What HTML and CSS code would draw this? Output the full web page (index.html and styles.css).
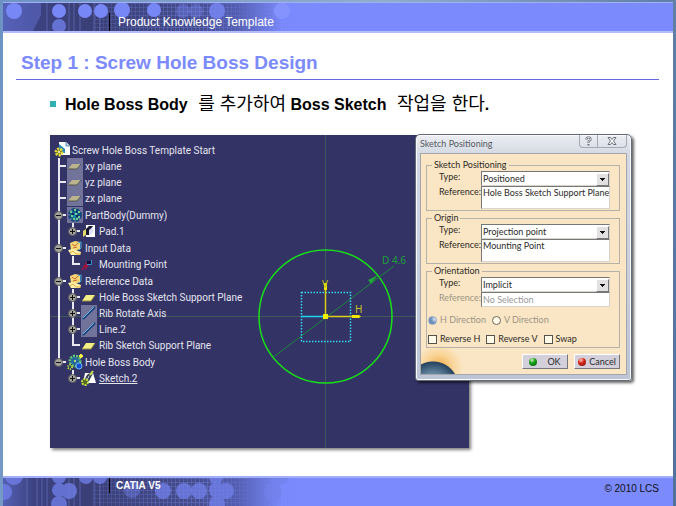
FILE: index.html
```
<!DOCTYPE html>
<html lang="ko">

<head>
    <meta charset="UTF-8">
    <meta name="viewport" content="width=device-width, initial-scale=1.0">
    <title>Product Knowledge Template</title>
    <link rel="stylesheet" href="styles.css">
</head>

<body>

    <!-- shared icons -->
    <svg class="defs" width="0" height="0" aria-hidden="true">
        <defs>
            <linearGradient id="fade" x1="0" x2="1" y1="0" y2="0">
                <stop offset="0" stop-color="#5560b4"/>
                <stop offset="0.1" stop-color="#3c4280"/>
                <stop offset="0.3" stop-color="#3a3f76"/>
                <stop offset="0.62" stop-color="#454c8c"/>
                <stop offset="0.76" stop-color="#545fb4"/>
                <stop offset="0.9" stop-color="#7b8afc" stop-opacity="0.9"/>
                <stop offset="1" stop-color="#7b8afc"/>
            </linearGradient>
            <linearGradient id="meshFade" x1="0" x2="1" y1="0" y2="0">
                <stop offset="0" stop-color="#fff" stop-opacity="0.4"/>
                <stop offset="0.6" stop-color="#fff"/>
                <stop offset="1" stop-color="#fff" stop-opacity="0"/>
            </linearGradient>
            <pattern id="mesh" width="4" height="4" patternUnits="userSpaceOnUse">
                <path d="M0 .5H4M.5 0V4" stroke="#6873c8" stroke-opacity=".6"/>
            </pattern>
            <mask id="meshMask">
                <rect x="90" width="200" height="30" fill="url(#meshFade)"/>
            </mask>

            <symbol id="plane" viewBox="0 0 16 16">
                <path d="M5 6H14L10 12H1Z" fill="#f4ee86"/>
                <path d="M1 12H10L14 6" fill="none" stroke="#9b9440"/>
            </symbol>
            <symbol id="planeHidden" viewBox="0 0 16 16">
                <rect width="16" height="16" fill="#71739b"/>
                <path d="M5 6H14L10 11H1Z" fill="#b9b48c"/>
                <path d="M1 11H10L14 6" fill="none" stroke="#57564c"/>
            </symbol>
            <symbol id="line" viewBox="0 0 16 16">
                <rect width="16" height="16" fill="#71739b"/>
                <path d="M2 14L14 2" stroke="#0c3f78" stroke-width="2"/>
                <path d="M2 13L13 2" stroke="#79b7e6"/>
            </symbol>
            <symbol id="gearBody" viewBox="0 0 16 16">
                <rect width="16" height="16" fill="#71739b"/>
                <circle cx="8" cy="8" r="5" fill="#1c7fa6" stroke="#124a7c" stroke-width="4" stroke-dasharray="3 1"/>
                <path d="M3 5h2M7 3h2M11 5h2M4 9h2M8 7h2M11 10h2M6 12h2M9 12h2" stroke="#6ed08a" stroke-width="2"/>
                <path d="M5 7h2M9 9h2M9 5h1" stroke="#10265f" stroke-width="2"/>
            </symbol>
            <symbol id="pad" viewBox="0 0 16 16">
                <path d="M5 2H14V14H5Z" fill="#fff"/>
                <path d="M4 7L8 3H12L9 7V12H4Z" fill="#17172f"/>
                <path d="M2 8L5 6V12L2 14Z" fill="#e5d66a"/>
                <path d="M8 7L12 4V9L8 13Z" fill="#dcdff5"/>
            </symbol>
            <symbol id="geoSet" viewBox="0 0 16 16">
                <path d="M3 3L8 1L13 2V9L8 11L4 10Z" fill="#f5d777"/>
                <path d="M5 4L8 6L11 3M6 8L10 7" fill="none" stroke="#ce6535"/>
                <path d="M1 10L6 9L14 12L13 15H4Z" fill="#fff2a8"/>
                <path d="M3 13L6 11L9 14H14" fill="none" stroke="#e0a83d"/>
                <path d="M11 3L14 2V8L12 10" fill="none" stroke="#49b2da"/>
            </symbol>
            <symbol id="point" viewBox="0 0 16 16">
                <path d="M1 14L5 8V12L7 9" fill="none" stroke="#a3123d" stroke-width="1.500"/>
                <rect x="6" y="5" width="4" height="4" fill="#0c1038"/>
                <path d="M6 8.500H10.500V4" fill="none" stroke="#3c8fd0"/>
            </symbol>
            <symbol id="bodyNew" viewBox="0 0 16 16">
                <circle cx="8" cy="7" r="5" fill="none" stroke="#63c97a" stroke-width="3" stroke-dasharray="2 1"/>
                <circle cx="8" cy="7" r="4" fill="#276b9c"/>
                <circle cx="8" cy="7" r="1" fill="#e4f28b"/>
                <circle cx="3" cy="13" r="2" fill="none" stroke="#b9e33d" stroke-width="2" stroke-dasharray="1 1"/>
                <circle cx="12" cy="12" r="3" fill="#174ed0" stroke="#68b9f8"/>
                <path d="M14 0V4M12 2H16" stroke="#f3ed3b" stroke-width="2"/>
            </symbol>
            <symbol id="sketch" viewBox="0 0 16 16">
                <path d="M4 3H12L15 13H2Z" fill="#fff"/>
                <path d="M5 10C6 5 8 4 10 4M11 3L7 11" fill="none" stroke="#344057" stroke-width="2"/>
                <circle cx="4" cy="12" r="3" fill="#526620" stroke="#c4e24c" stroke-width="2" stroke-dasharray="2 1"/>
                <path d="M9 5L12 1" stroke="#c8e44a" stroke-width="2"/>
            </symbol>
            <symbol id="part" viewBox="0 0 16 16">
                <path d="M5 0H12L16 4V13H5Z" fill="#fff"/>
                <path d="M12 0V4H16" fill="#bcd6ea" stroke="#5f8fb8"/>
                <path d="M5 2L11 7V11H5Z" fill="#2386b8"/>
                <circle cx="5" cy="10" r="3" fill="#6f6a12" stroke="#e5dc3a" stroke-width="3" stroke-dasharray="2 1"/>
                <circle cx="5" cy="10" r="1" fill="#fff"/>
            </symbol>
        </defs>
    </svg>

    <div class="slide">
        <header class="band">
            <svg class="band-art" viewBox="0 0 340 28" preserveAspectRatio="xMinYMin slice" aria-hidden="true">
                <rect width="310" height="28" fill="url(#fade)"/>
                <path d="M0 0H38V12L30 28H0Z" fill="#5762bb" opacity=".7"/>
                <path d="M44 0V28M66 0V28M71 0V28M77 0V28M91 0V28M97 0V28" stroke="#6c76c4" opacity=".6"/>
                <rect width="310" height="28" fill="url(#mesh)" mask="url(#meshMask)"/>
                <g fill="#7887f6">
                    <circle cx="11" cy="8" r="8"/>
                    <circle cx="56" cy="8" r="7"/>
                    <circle cx="56" cy="23" r="7" opacity=".7"/>
                    <circle cx="82" cy="8" r="7"/>
                    <circle cx="98" cy="8" r="7"/>
                    <circle cx="119" cy="7" r="8"/>
                    <circle cx="151" cy="7" r="7"/>
                    <circle cx="180" cy="8" r="7" opacity=".4"/>
                    <circle cx="193" cy="8" r="7" opacity=".4"/>
                    <circle cx="214" cy="8" r="8" opacity=".8"/>
                    <circle cx="279" cy="8" r="8" fill="#8593ff"/>
                </g>
            </svg>
            <p class="band-text">Product Knowledge Template</p>
        </header>

        <main>
            <h1>Step 1 : Screw Hole Boss Design</h1>
            <ul class="points">
                <li>Hole Boss Body <span class="ko">를 추가하여</span> Boss Sketch <span class="ko">작업을 한다</span>.</li>
            </ul>

            <div class="capture">
                <div class="viewer">
                    <svg class="sketch" viewBox="0 0 419 313" preserveAspectRatio="xMinYMin slice" role="img" aria-label="Sketch with circle D 4.6">
                        <path d="M0 181.500H419M275.500 0V313" stroke="#40585a"/>
                        <circle cx="275.500" cy="181.500" r="66.500" fill="none" stroke="#18e018" stroke-width="1.500"/>
                        <path d="M223.500 222L344 131" stroke="#1d8a3a"/>
                        <path d="M328 140L321 149L318 145Z" fill="#1fa53a"/>
                        <rect x="251.500" y="157.500" width="49" height="49" fill="none" stroke="#35d8ee" stroke-width="1.500" stroke-dasharray="1.500 1.500"/>
                        <path d="M251 181.500H275" stroke="#20d7f0" stroke-width="1.500"/>
                        <path d="M275.500 181V150M275 181.500H302" stroke="#d8d010" stroke-width="1.500"/>
                        <path d="M274 148H277V155H274ZM302 180H309L311 181.500L309 183H302Z" fill="#f0e800"/>
                        <rect x="273" y="179" width="5" height="5" fill="#f4f000"/>
                        <g class="sketch-text">
                            <text x="272" y="153" fill="#c8c020">V</text>
                            <text x="305" y="178" fill="#c8c020">H</text>
                            <text x="332" y="129" fill="#1fa03c">D 4.6</text>
                        </g>
                    </svg>

                    <div class="tree">
                        <div class="root"><svg class="icon"><use href="#part"/></svg>Screw Hole Boss Template Start</div>
                        <ul>
                            <li><div class="node"><svg class="icon"><use href="#planeHidden"/></svg>xy plane</div></li>
                            <li><div class="node"><svg class="icon"><use href="#planeHidden"/></svg>yz plane</div></li>
                            <li><div class="node"><svg class="icon"><use href="#planeHidden"/></svg>zx plane</div></li>
                            <li class="group">
                                <div class="node"><button class="toggle open" aria-label="Collapse PartBody"></button><svg class="icon"><use href="#gearBody"/></svg>PartBody(Dummy)</div>
                                <ul>
                                    <li><div class="node"><button class="toggle" aria-label="Expand Pad.1"></button><svg class="icon"><use href="#pad"/></svg>Pad.1</div></li>
                                </ul>
                            </li>
                            <li class="group">
                                <div class="node"><button class="toggle open" aria-label="Collapse Input Data"></button><svg class="icon"><use href="#geoSet"/></svg>Input Data</div>
                                <ul>
                                    <li><div class="node"><svg class="icon"><use href="#point"/></svg>Mounting Point</div></li>
                                </ul>
                            </li>
                            <li class="group">
                                <div class="node"><button class="toggle open" aria-label="Collapse Reference Data"></button><svg class="icon"><use href="#geoSet"/></svg>Reference Data</div>
                                <ul>
                                    <li><div class="node"><button class="toggle" aria-label="Expand Hole Boss Sketch Support Plane"></button><svg class="icon"><use href="#plane"/></svg>Hole Boss Sketch Support Plane</div></li>
                                    <li><div class="node"><button class="toggle" aria-label="Expand Rib Rotate Axis"></button><svg class="icon"><use href="#line"/></svg>Rib Rotate Axis</div></li>
                                    <li><div class="node"><button class="toggle" aria-label="Expand Line.2"></button><svg class="icon"><use href="#line"/></svg>Line.2</div></li>
                                    <li><div class="node"><svg class="icon"><use href="#plane"/></svg>Rib Sketch Support Plane</div></li>
                                </ul>
                            </li>
                            <li class="group">
                                <div class="node"><button class="toggle open" aria-label="Collapse Hole Boss Body"></button><svg class="icon"><use href="#bodyNew"/></svg>Hole Boss Body</div>
                                <ul>
                                    <li><div class="node"><button class="toggle" aria-label="Expand Sketch.2"></button><svg class="icon"><use href="#sketch"/></svg><span class="current">Sketch.2</span></div></li>
                                </ul>
                            </li>
                        </ul>
                    </div>
                </div>

                <form class="dialog">
                    <div class="titlebar">
                        <h2>Sketch Positioning</h2>
                        <div class="window-buttons">
                            <button type="button" aria-label="Help">
                                <svg width="9" height="10" viewBox="0 0 9 10"><path d="M2.500 3.500V2.500L3.500 1.500H5.500L6.500 2.500V4L4.500 5.500V7M4.500 8V9.500" fill="none" stroke="#6b717c" stroke-width="2"/><path d="M2.500 3V2.500L3.500 1.500H5.500L6.500 2.500V4L4.500 5.500V6.500" fill="none" stroke="#fff" stroke-width=".7"/></svg>
                            </button>
                            <button type="button" class="close" aria-label="Close">
                                <svg width="10" height="8" viewBox="0 0 10 8"><path d="M1 .5H3.500L5 2.500L6.500 .5H9L6.500 4L9 7.500H6.500L5 5.500L3.500 7.500H1L3.500 4Z" fill="#fff" stroke="#6b717c"/></svg>
                            </button>
                        </div>
                    </div>
                    <div class="dialog-body">
                        <fieldset>
                            <legend>Sketch Positioning</legend>
                            <label for="posType">Type:</label>
                            <span class="combo"><select id="posType"><option>Positioned</option></select></span>
                            <label for="posRef">Reference:</label>
                            <textarea id="posRef" rows="1">Hole Boss Sketch Support Plane</textarea>
                        </fieldset>
                        <fieldset>
                            <legend>Origin</legend>
                            <label for="originType">Type:</label>
                            <span class="combo"><select id="originType"><option>Projection point</option></select></span>
                            <label for="originRef">Reference:</label>
                            <textarea id="originRef" rows="1">Mounting Point</textarea>
                        </fieldset>
                        <fieldset>
                            <legend>Orientation</legend>
                            <label for="orientType">Type:</label>
                            <span class="combo"><select id="orientType"><option>Implicit</option></select></span>
                            <label for="orientRef" class="off">Reference:</label>
                            <input type="text" id="orientRef" value="No Selection" disabled>
                            <div class="options off">
                                <label><input type="radio" name="dir" checked disabled>H Direction</label>
                                <label><input type="radio" name="dir" disabled>V Direction</label>
                            </div>
                            <div class="options checks">
                                <label><input type="checkbox">Reverse H</label>
                                <label><input type="checkbox">Reverse V</label>
                                <label><input type="checkbox">Swap</label>
                            </div>
                        </fieldset>
                        <div class="actions">
                            <button type="button"><span class="dot ok"></span>OK</button>
                            <button type="button"><span class="dot cancel"></span>Cancel</button>
                        </div>
                    </div>
                </form>
            </div>
        </main>

        <footer class="band">
            <svg class="band-art" viewBox="0 0 340 28" preserveAspectRatio="xMinYMin slice" aria-hidden="true">
                <rect width="310" height="28" fill="url(#fade)"/>
                <path d="M24 0V28M34 0V28M39 0V28M44 0V28M66 0V28M71 0V28M77 0V28M91 0V28M97 0V28" stroke="#6c76c4" opacity=".6"/>
                <rect width="310" height="28" fill="url(#mesh)" mask="url(#meshMask)"/>
                <g fill="#7281ec" opacity=".75">
                    <circle cx="11" cy="-2" r="9"/>
                    <circle cx="1" cy="14" r="8"/>
                    <circle cx="56" cy="-1" r="7"/>
                    <circle cx="56" cy="12" r="7"/>
                    <circle cx="66" cy="13" r="8"/>
                    <circle cx="56" cy="26" r="8"/>
                    <circle cx="83" cy="-1" r="7"/>
                    <circle cx="97" cy="-1" r="7"/>
                    <circle cx="129" cy="12" r="8" opacity=".6"/>
                    <circle cx="160" cy="13" r="8"/>
                    <circle cx="181" cy="13" r="8"/>
                    <circle cx="196" cy="13" r="8"/>
                    <circle cx="213" cy="-1" r="7"/>
                    <circle cx="214" cy="12" r="8"/>
                    <circle cx="223" cy="13" r="8"/>
                    <circle cx="214" cy="26" r="8"/>
                    <circle cx="270" cy="14" r="9"/>
                    <circle cx="277" cy="-1" r="8"/>
                </g>
            </svg>
            <p class="band-text">CATIA V5</p>
            <small>© 2010 LCS</small>
        </footer>
    </div>

</body>

</html>
```
FILE: styles.css
```
* {
    box-sizing: border-box;
}

body {
    margin: 0;
    min-height: 100vh;
    display: flex;
    padding: 2px 3px 0;
    background: linear-gradient(100deg, #6d93c4, #90adcc 50%, #4f729b);
    font-family: "Liberation Sans", Arial, sans-serif;
}

h1, h2, p, ul {
    margin: 0;
    padding: 0;
}

ul {
    list-style: none;
}

.defs {
    position: absolute;
}

.slide {
    flex: 1;
    display: flex;
    flex-direction: column;
    background: #fff;
}

/* top and bottom bands */

.band {
    display: grid;
    grid-template-columns: 1fr auto;
    height: 31px;
    background: #7b8afc;
    border-top: 1px solid #a3aef8;
    border-bottom: 2px solid #b4bcfb;
}

.band-art {
    grid-area: 1 / 1 / 2 / 3;
    width: 340px;
    height: 28px;
}

.band-text {
    grid-area: 1 / 1;
    align-self: end;
    margin-left: 106px;
    padding-left: 8px;
    border-left: 1px solid #000;
    color: #fff;
    font-size: 12px;
    line-height: 18px;
}

footer.band {
    height: 30px;
    border-top: 2px solid #a3aef8;
    border-bottom: 0;
}

footer .band-text {
    align-self: start;
    padding-left: 6px;
    font-size: 10px;
    font-weight: bold;
    line-height: 15px;
}

footer small {
    grid-area: 1 / 2;
    padding: 3px 14px 0 0;
    color: #111;
    font-size: 10px;
    line-height: 15px;
}

/* slide content */

main {
    flex: 1;
}

h1 {
    margin: 18px 14px 0 13px;
    padding: 0 5px 4px;
    border-bottom: 1px solid #6666e0;
    color: #7b8afc;
    font-size: 19px;
    line-height: 24px;
}

.points {
    margin: 13px 20px 0 47px;
    font-size: 16px;
    font-weight: bold;
    line-height: 24px;
}

.points li::before {
    content: "";
    display: inline-block;
    width: 6px;
    height: 6px;
    margin-right: 9px;
    vertical-align: 3px;
    background: #33b1b1;
}

.ko {
    margin-left: 6px;
    font-family: "Noto Sans CJK KR", sans-serif;
    font-size: 18px;
    font-weight: normal;
    line-height: 1;
}

.capture {
    position: relative;
    margin: 18px 41px 0 47px;
}

.viewer {
    display: grid;
    margin-right: 163px;
    background: #333366;
    box-shadow: 2px 2px 3px rgba(0, 0, 0, 0.5);
}

.sketch {
    grid-area: 1 / 1;
    width: 100%;
    height: 100%;
}

.sketch-text {
    font: 10px "Noto Sans", sans-serif;
}

/* specification tree */

.tree {
    grid-area: 1 / 1;
    z-index: 1;
    padding: 7px 0 62px 4px;
    color: #e4e4ee;
    font-family: Roboto, sans-serif;
    font-size: 10px;
}

.root,
.node {
    display: flex;
    align-items: center;
    height: 16px;
    white-space: nowrap;
}

.icon {
    flex: none;
    width: 16px;
    height: 16px;
    margin-right: 2px;
}

.tree > ul {
    margin-left: 4px;
}

.tree li {
    position: relative;
}

.tree li li {
    margin-left: 14px;
}

.tree li::before {
    content: "";
    position: absolute;
    top: 0;
    left: 0;
    width: 2px;
    height: 100%;
    background: #e8e8f0;
}

.tree li:last-child::before {
    height: 9px;
}

.group {
    padding-top: 1px;
}

.node::before {
    content: "";
    order: -1;
    width: 8px;
    height: 2px;
    margin-right: 1px;
    background: #e8e8f0;
}

.toggle {
    order: -2;
    z-index: 1;
    width: 9px;
    height: 9px;
    margin: 0 -5px 0 -4px;
    padding: 0;
    border: 1px solid #55555c;
    border-radius: 50%;
    background:
        linear-gradient(#111, #111) center / 5px 1px no-repeat,
        linear-gradient(#111, #111) center / 1px 5px no-repeat,
        #a2a29c;
}

.toggle.open {
    background: linear-gradient(#111, #111) center / 5px 1px no-repeat, #a2a29c;
}

.current {
    text-decoration: underline;
}

/* sketch positioning window */

.dialog {
    position: absolute;
    top: -1px;
    right: 0;
    width: 217px;
    padding: 0 4px 5px;
    border: 1px solid #666b78;
    border-radius: 5px 5px 3px 3px;
    background: linear-gradient(#eceef2, #d3d8e2 20px, #bcc5d5);
    box-shadow: inset 0 0 0 1px #f6f8fb, 2px 2px 3px rgba(0, 0, 0, 0.6);
    color: #2c2a28;
    font-family: Lato, sans-serif;
    font-size: 9px;
}

.dialog button,
.dialog input,
.dialog select,
.dialog textarea {
    color: inherit;
    font: inherit;
}

.titlebar {
    display: flex;
    justify-content: space-between;
    height: 18px;
}

.titlebar h2 {
    color: #555a64;
    font-size: 9px;
    font-weight: normal;
    line-height: 18px;
}

.window-buttons {
    display: flex;
    height: 13px;
    border: 1px solid #a4a9b4;
    border-top: 0;
    border-radius: 0 0 4px 4px;
}

.window-buttons button {
    display: grid;
    place-items: center;
    width: 17px;
    padding: 0;
    border: 0;
    background: none;
}

.window-buttons .close {
    width: 29px;
    border-left: 1px solid #a4a9b4;
}

.dialog-body {
    padding: 5px 6px 5px 5px;
    border: 1px solid #a4a6ac;
    background:
        radial-gradient(circle at 12px 233px, #c4d8e2 0, #6f93ad 12px, #27435f 25px, transparent 26px),
        radial-gradient(circle at 18px 214px, #f3a63c 0, rgba(248, 196, 110, 0.5) 14px, transparent 24px),
        #fae6c4;
}

fieldset {
    display: grid;
    grid-template-columns: 42px 1fr;
    margin: 0 0 1px;
    padding: 0 9px 1px 12px;
    border: 1px solid #b5b2aa;
    line-height: 12px;
}

legend {
    margin-left: -7px;
    padding: 0 2px;
}

.combo {
    position: relative;
    display: grid;
}

.combo::after {
    content: "";
    position: absolute;
    top: 2px;
    right: 1px;
    width: 11px;
    height: 11px;
    border: 1px solid;
    border-color: #fff #777 #777 #fff;
    background: linear-gradient(#111, #111) center 4px / 5px 1px no-repeat,
        linear-gradient(#111, #111) center 5px / 3px 1px no-repeat,
        linear-gradient(#111, #111) center 6px / 1px 1px no-repeat, #e2e0e0;
    pointer-events: none;
}

select,
textarea,
fieldset input[type="text"] {
    appearance: none;
    width: 100%;
    height: 15px;
    margin: 0;
    padding: 0 1px;
    border: 1px solid #d8d4cc;
    border-top-color: #777;
    border-left-color: #777;
    border-radius: 0;
    background: #fff;
}

textarea {
    display: block;
    height: 23px;
    resize: none;
    overflow: hidden;
    white-space: nowrap;
}

.off {
    color: #9c9484;
}

.dialog input[type="text"]:disabled {
    color: #999;
}

.options {
    grid-column: 1 / 3;
    display: flex;
    gap: 6px;
    margin: 7px -8px 0 -11px;
}

.options label {
    display: flex;
    align-items: center;
    gap: 3px;
    white-space: nowrap;
}

.options input {
    appearance: none;
    width: 9px;
    height: 9px;
    margin: 0;
    border: 1px solid #55524c;
    background: #fffbe8;
}

.options input[type="radio"] {
    border-color: #6c685c;
    border-radius: 50%;
}

.options input[type="radio"]:checked {
    border-color: #8fa6c4;
    background: radial-gradient(circle at 6px 2px, #e9f1fa, #6b8dbb 4px);
}

.checks {
    margin-bottom: 1px;
}

.actions {
    display: flex;
    justify-content: flex-end;
    gap: 6px;
    margin-top: 6px;
}

.actions button {
    display: flex;
    align-items: center;
    justify-content: center;
    gap: 3px;
    width: 46px;
    height: 15px;
    padding: 0;
    border: 1px solid;
    border-color: #fff #77757c #77757c #fff;
    background: #d3d0dc;
}

.dot {
    width: 8px;
    height: 8px;
    border-radius: 50%;
}

.ok {
    margin-right: 7px;
    background: radial-gradient(circle at 3px 2px, #d5f5c5, #17a017 3px, #0b5c10);
}

.cancel {
    background: radial-gradient(circle at 3px 2px, #ffd5c8, #d5281c 3px, #7c100c);
}
```
